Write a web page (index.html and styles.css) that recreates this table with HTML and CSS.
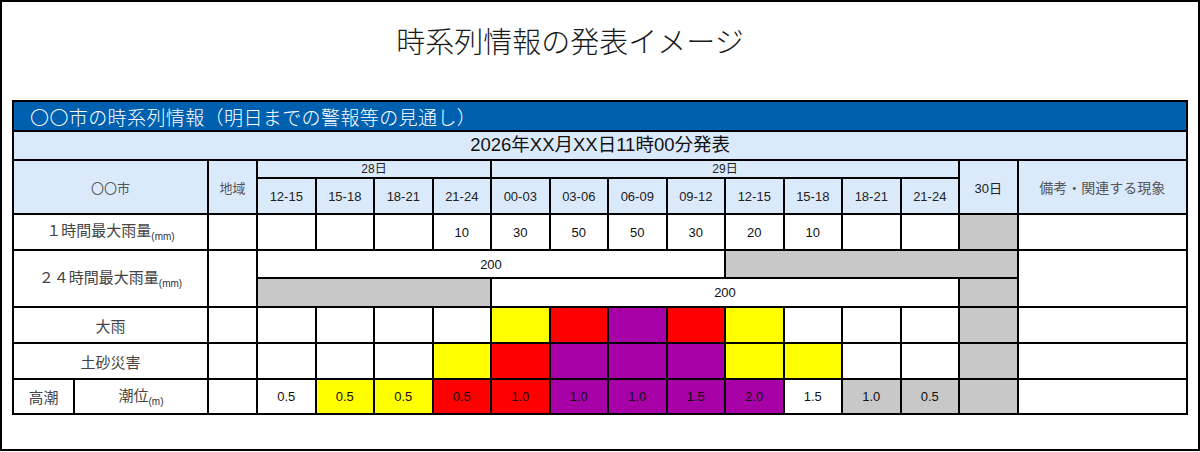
FILE: index.html
```html
<!DOCTYPE html>
<html lang="ja">
<head>
<meta charset="utf-8">
<link rel="stylesheet" href="styles.css">
</head>
<body>
<div class="frame">
  <h1 class="title">時系列情報の発表イメージ</h1>
  <table class="ts">
    <colgroup>
      <col class="c-a"><col class="c-b"><col class="c-area">
      <col class="c-t"><col class="c-t"><col class="c-t"><col class="c-t">
      <col class="c-t"><col class="c-t"><col class="c-t"><col class="c-t">
      <col class="c-t"><col class="c-t"><col class="c-t"><col class="c-t">
      <col class="c-t"><col class="c-note">
    </colgroup>
    <tr class="r-bar"><td colspan="17" class="bar">〇〇市の時系列情報（明日までの警報等の見通し）</td></tr>
    <tr class="r-date"><td colspan="17" class="date">2026年XX月XX日11時00分発表</td></tr>
    <tr class="r-h1">
      <td colspan="2" rowspan="2" class="hd jp">〇〇市</td>
      <td rowspan="2" class="hd jp">地域</td>
      <td colspan="4" class="hd day">28日</td>
      <td colspan="8" class="hd day">29日</td>
      <td rowspan="2" class="hd num">30日</td>
      <td rowspan="2" class="hd jp note">備考・関連する現象</td>
    </tr>
    <tr class="r-h2">
      <td class="hd num">12-15</td><td class="hd num">15-18</td><td class="hd num">18-21</td><td class="hd num">21-24</td>
      <td class="hd num">00-03</td><td class="hd num">03-06</td><td class="hd num">06-09</td><td class="hd num">09-12</td>
      <td class="hd num">12-15</td><td class="hd num">15-18</td><td class="hd num">18-21</td><td class="hd num">21-24</td>
    </tr>
    <tr class="r-row">
      <td colspan="2" class="lbl">１時間最大雨量<span class="unit">(mm)</span></td>
      <td></td>
      <td></td><td></td><td></td><td class="num">10</td>
      <td class="num">30</td><td class="num">50</td><td class="num">50</td><td class="num">30</td>
      <td class="num">20</td><td class="num">10</td><td></td><td></td>
      <td class="g"></td><td></td>
    </tr>
    <tr class="r-half">
      <td colspan="2" rowspan="2" class="lbl">２４時間最大雨量<span class="unit">(mm)</span></td>
      <td rowspan="2"></td>
      <td colspan="8" class="num">200</td>
      <td colspan="5" class="g"></td>
      <td rowspan="2"></td>
    </tr>
    <tr class="r-half2">
      <td colspan="4" class="g"></td>
      <td colspan="8" class="num">200</td>
      <td class="g"></td>
    </tr>
    <tr class="r-row">
      <td colspan="2" class="lbl">大雨</td>
      <td></td>
      <td></td><td></td><td></td><td></td>
      <td class="y"></td><td class="r"></td><td class="p"></td><td class="r"></td>
      <td class="y"></td><td></td><td></td><td></td>
      <td class="g"></td><td></td>
    </tr>
    <tr class="r-row">
      <td colspan="2" class="lbl">土砂災害</td>
      <td></td>
      <td></td><td></td><td></td><td class="y"></td>
      <td class="r"></td><td class="p"></td><td class="p"></td><td class="p"></td>
      <td class="y"></td><td class="y"></td><td></td><td></td>
      <td class="g"></td><td></td>
    </tr>
    <tr class="r-last">
      <td class="lbl">高潮</td>
      <td class="lbl">潮位<span class="unit">(m)</span></td>
      <td></td>
      <td class="num">0.5</td><td class="num y">0.5</td><td class="num y">0.5</td><td class="num r">0.5</td>
      <td class="num r">1.0</td><td class="num p">1.0</td><td class="num p">1.0</td><td class="num p">1.5</td>
      <td class="num p">2.0</td><td class="num">1.5</td><td class="num g">1.0</td><td class="num g">0.5</td>
      <td class="g"></td><td></td>
    </tr>
  </table>
</div>
</body>
</html>
```

FILE: styles.css
```css
* { box-sizing: border-box; }
html, body { margin: 0; padding: 0; background: #fff; }
body { font-family: "Liberation Sans", "Noto Sans CJK JP", sans-serif; }

.frame {
  width: 1200px;
  height: 451px;
  border: 2px solid #000;
  padding: 0 10px;
}

.title {
  margin: 0;
  padding-top: 18px;
  padding-right: 60px;
  height: 98px;
  line-height: 40px;
  font-family: "Noto Sans CJK JP", sans-serif;
  font-weight: 300;
  font-size: 29px;
  color: #1a1a1a;
  text-align: center;
}

.ts {
  width: 1174px;
  table-layout: fixed;
  border-collapse: collapse;
  border: 2px solid #000;
}
.c-a { width: 61px; }
.c-b { width: 134px; }
.c-area { width: 49px; }
.c-t { width: 58.5px; }
.c-note { width: 169.5px; }

.ts td {
  border: 2px solid #000;
  padding: 0;
  text-align: center;
  vertical-align: middle;
  background: #fff;
  color: #111;
}

.r-bar { height: 30px; }
.r-date { height: 29px; }
.r-h1 { height: 18px; }
.r-h2 { height: 36px; }
.r-row { height: 36px; }
.r-half { height: 28px; }
.r-half2 { height: 29px; }
.r-last { height: 35px; }

.ts td.bar {
  background: #0060b0;
  color: #fff;
  text-align: left;
  padding-left: 16px;
  font-family: "Noto Sans CJK JP", sans-serif;
  font-weight: 300;
  font-size: 19px;
  line-height: 1;
  letter-spacing: 0.4px;
}
.ts td.date {
  background: #dbeafb;
  font-size: 18.5px;
  line-height: 1;
  color: #111;
}
.ts td.hd {
  background: #dbeafb;
  font-size: 13px;
  color: #222;
}
.ts td.hd.jp {
  font-family: "Noto Sans CJK JP", sans-serif;
  color: #555;
}
.ts td.hd.note { font-size: 14px; }
.ts td.day { font-size: 12px; line-height: 1; }

.num { font-size: 13px; }

.ts td.lbl {
  font-family: "Noto Sans CJK JP", sans-serif;
  font-size: 15px;
  color: #444;
  line-height: 1;
}
.unit {
  font-family: "Liberation Sans", sans-serif;
  font-size: 10px;
  vertical-align: -4px;
  color: #333;
}

.ts td.g { background: #c8c8c8; }
.ts td.y { background: #ffff00; }
.ts td.r { background: #ff0000; }
.ts td.p { background: #a600a6; }
```
